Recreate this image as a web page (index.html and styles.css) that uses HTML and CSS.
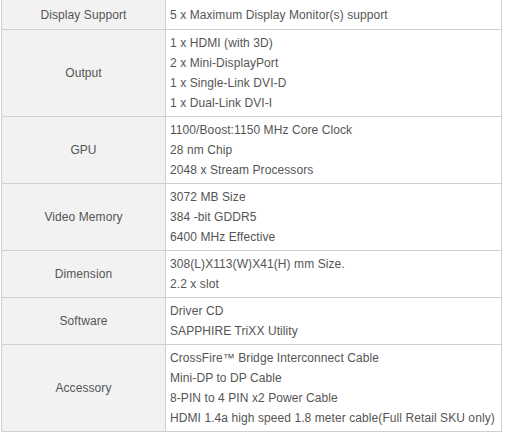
FILE: index.html
```html
<!DOCTYPE html>
<html lang="en">
  <head>
    <meta charset="UTF-8" />
    <title>Specifications</title>
    <link rel="stylesheet" href="styles.css">
  </head>
  <body>
    <table class="specs">
      <tr>
        <th>Display Support</th>
        <td>5 x Maximum Display Monitor(s) support</td>
      </tr>
      <tr>
        <th>Output</th>
        <td>1 x HDMI (with 3D)<br>2 x Mini-DisplayPort<br>1 x Single-Link DVI-D<br>1 x Dual-Link DVI-I</td>
      </tr>
      <tr>
        <th>GPU</th>
        <td>1100/Boost:1150 MHz Core Clock<br>28 nm Chip<br>2048 x Stream Processors</td>
      </tr>
      <tr>
        <th>Video Memory</th>
        <td>3072 MB Size<br>384 -bit GDDR5<br>6400 MHz Effective</td>
      </tr>
      <tr>
        <th>Dimension</th>
        <td>308(L)X113(W)X41(H) mm Size.<br>2.2 x slot</td>
      </tr>
      <tr>
        <th>Software</th>
        <td>Driver CD<br>SAPPHIRE TriXX Utility</td>
      </tr>
      <tr>
        <th>Accessory</th>
        <td>CrossFire&trade; Bridge Interconnect Cable<br>Mini-DP to DP Cable<br>8-PIN to 4 PIN x2 Power Cable<br>HDMI 1.4a high speed 1.8 meter cable(Full Retail SKU only)</td>
      </tr>
    </table>
  </body>
</html>
```

FILE: styles.css
```css
body {
  margin: 0;
  background: #fff;
  font-family: "Liberation Sans", Arial, sans-serif;
  font-size: 12px;
  color: #555;
  letter-spacing: 0.08px;
}

.specs {
  width: 501px;
  margin: -1px 0 0 1px;
  border-collapse: collapse;
}

.specs th,
.specs td {
  border: 1px solid #cfcfcf;
  line-height: 20px;
  padding: 3px 4px;
  vertical-align: middle;
}

.specs th {
  width: 155px;
  background: #f2f2f2;
  font-weight: normal;
  text-align: center;
}

.specs td {
  text-align: left;
}

.specs tr:first-child th,
.specs tr:first-child td {
  padding-top: 5px;
  padding-bottom: 4px;
}
```
